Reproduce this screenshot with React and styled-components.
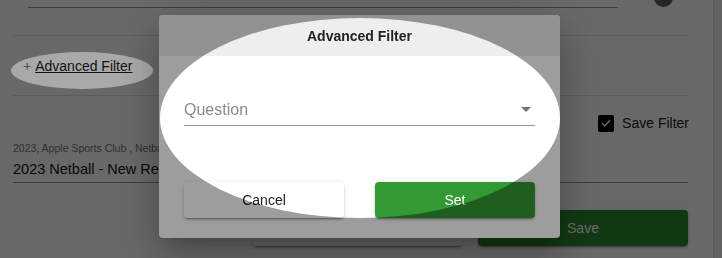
import styled, { createGlobalStyle } from 'styled-components';

const GlobalStyle = createGlobalStyle`
  html, body {
    margin: 0;
    height: 100%;
    overflow: hidden;
    background: #fff;
    font-family: 'Liberation Sans', Arial, sans-serif;
  }
`;

// holes cut into the tour overlay
const spots = [
  { cx: 360, cy: 118, rx: 200, ry: 100 },
  { cx: 82, cy: 70.5, rx: 71, ry: 18.5 },
];

export default function App() {
  return (
    <>
      <GlobalStyle />
      <Page>
        <Main>
          <TopRow>
            <TopField />
            <Knob />
          </TopRow>
          <Divider $top={27} />
          <FilterRow>
            <Plus>+</Plus>
            <FilterLink>Advanced Filter</FilterLink>
          </FilterRow>
          <Divider />
          <SaveRow>
            <CheckBox>
              <svg width="12" height="12" viewBox="0 0 12 12">
                <path d="M2 6.2 L4.8 9 L10 3.2" fill="none" stroke="#fff" strokeWidth="1.4" />
              </svg>
            </CheckBox>
            <CheckLabel>Save Filter</CheckLabel>
          </SaveRow>
          <Field>
            <Caption>2023, Apple Sports Club , Netball , Registration</Caption>
            <Value>2023 Netball - New Registration</Value>
          </Field>
          <Actions>
            <PageButton>Cancel</PageButton>
            <PageButton $primary $dark>Save</PageButton>
          </Actions>
        </Main>
        <Scrollbar />
      </Page>

      <Backdrop>
        <Dialog>
          <DialogHeader>Advanced Filter</DialogHeader>
          <DialogBody>
            <Select>
              <SelectLabel>Question</SelectLabel>
              <svg width="10" height="5" viewBox="0 0 10 5">
                <path d="M0 0 L5 5 L10 0 Z" fill="#757575" />
              </svg>
            </Select>
            <DialogActions>
              <DialogButton>Cancel</DialogButton>
              <DialogButton $primary>Set</DialogButton>
            </DialogActions>
          </DialogBody>
        </Dialog>
      </Backdrop>

      <TourMask width="722" height="258">
        <defs>
          <mask id="tour-holes">
            <rect width="100%" height="100%" fill="#fff" />
            {spots.map((s, i) => (
              <ellipse key={i} cx={s.cx} cy={s.cy} rx={s.rx} ry={s.ry} fill="#000" />
            ))}
          </mask>
        </defs>
        <rect width="100%" height="100%" fill="rgba(0,0,0,0.385)" mask="url(#tour-holes)" />
      </TourMask>
    </>
  );
}

const Page = styled.div`
  display: flex;
  height: 258px;
`;

const Main = styled.div`
  flex: 1;
  padding: 0 25px 0 13px;
  display: flex;
  flex-direction: column;
`;

const Scrollbar = styled.div`
  width: 8px;
  background: #f1f1f1;
  border-left: 1px solid #e2e2e2;
`;

const TopRow = styled.div`
  display: flex;
  height: 8px;
`;

const TopField = styled.div`
  flex: 1;
  margin-left: 15px;
  margin-right: 36px;
  border-bottom: 1px solid #949494;
`;

const Knob = styled.div`
  width: 19px;
  height: 19px;
  margin: -12px 15px 0 0;
  border-radius: 50%;
  background: #5f5f5f;
`;

const Divider = styled.div`
  height: 1px;
  margin-top: ${(p) => p.$top || 0}px;
  background: #e0e0e0;
`;

const FilterRow = styled.div`
  display: flex;
  align-items: center;
  height: 20px;
  margin: 20px 0 19px;
  padding-left: 10px;
  font-size: 14px;
  line-height: 20px;
`;

const Plus = styled.span`
  color: #767676;
`;

const FilterLink = styled.span`
  margin-left: 4px;
  color: #1c1c1c;
  text-decoration: underline;
`;

const SaveRow = styled.div`
  display: flex;
  align-items: center;
  justify-content: flex-end;
  gap: 8px;
  height: 18px;
  margin-top: 18px;
`;

const CheckBox = styled.div`
  width: 16px;
  height: 17px;
  border-radius: 2px;
  background: #000;
  display: flex;
  align-items: center;
  justify-content: center;
`;

const CheckLabel = styled.span`
  font-size: 14px;
  color: #222;
  margin-right: -1px;
`;

const Field = styled.div`
  margin-top: 10px;
  padding-bottom: 4px;
  border-bottom: 1px solid #949494;
  white-space: nowrap;
  overflow: hidden;
`;

const Caption = styled.div`
  font-size: 10.5px;
  line-height: 12px;
  color: #777;
`;

const Value = styled.div`
  margin-top: 6px;
  font-size: 14.5px;
  line-height: 18px;
  color: #111;
`;

const Actions = styled.div`
  display: flex;
  justify-content: flex-end;
  gap: 16px;
  margin-top: 27px;
`;

const PageButton = styled.div`
  width: 210px;
  height: 36px;
  border-radius: 4px;
  display: flex;
  align-items: center;
  justify-content: center;
  font-size: 14px;
  color: ${(p) => (p.$primary ? '#fff' : '#222')};
  background: ${(p) => (p.$primary ? (p.$dark ? '#2b8a2e' : '#339933') : '#fff')};
  box-shadow: 0 3px 1px -2px rgba(0, 0, 0, 0.2), 0 2px 2px 0 rgba(0, 0, 0, 0.14),
    0 1px 5px 0 rgba(0, 0, 0, 0.12);
`;

const Backdrop = styled.div`
  position: fixed;
  inset: 0;
  padding: 0 3px 5px 0;
  display: flex;
  align-items: center;
  justify-content: center;
  background: rgba(0, 0, 0, 0.337);
`;

const Dialog = styled.div`
  width: 401px;
  border-radius: 4px;
  overflow: hidden;
  background: #fff;
  box-shadow: 0 11px 15px -7px rgba(0, 0, 0, 0.2), 0 24px 38px 3px rgba(0, 0, 0, 0.14),
    0 9px 46px 8px rgba(0, 0, 0, 0.12);
`;

const DialogHeader = styled.div`
  height: 41px;
  display: flex;
  align-items: center;
  justify-content: center;
  background: #eeeeee;
  font-size: 14px;
  font-weight: bold;
  color: #222;
`;

const DialogBody = styled.div`
  padding: 0 25px 20px;
`;

const Select = styled.div`
  display: flex;
  align-items: center;
  justify-content: space-between;
  margin-top: 44px;
  padding: 0 4px 6px 0;
  border-bottom: 1px solid #949494;
`;

const SelectLabel = styled.span`
  font-size: 16px;
  line-height: 19px;
  color: #8a8a8a;
`;

const DialogActions = styled.div`
  display: flex;
  justify-content: space-between;
  margin-top: 56px;
`;

const DialogButton = styled(PageButton)`
  width: 160px;
`;

const TourMask = styled.svg`
  position: fixed;
  left: 0;
  top: 0;
  pointer-events: none;
`;
